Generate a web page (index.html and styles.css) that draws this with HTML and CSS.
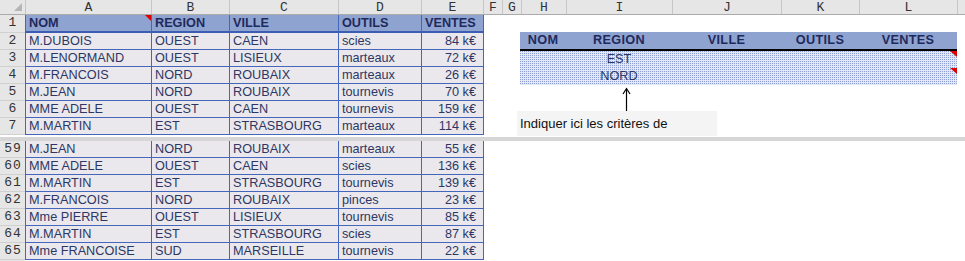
FILE: index.html
```html
<!DOCTYPE html>
<html lang="fr">
<head>
<meta charset="utf-8">
<link rel="stylesheet" href="styles.css">
</head>
<body>
<div class="sheet">
  <div class="colhdr">
    <div class="ch corner"><svg width="8" height="8" viewBox="0 0 8 8"><polygon points="8,0 8,8 0,8" fill="#b5b5b5"/></svg></div>
    <div class="ch w-a">A</div>
    <div class="ch w-b">B</div>
    <div class="ch w-c">C</div>
    <div class="ch w-d">D</div>
    <div class="ch w-e">E</div>
    <div class="ch w-f">F</div>
    <div class="ch w-g">G</div>
    <div class="ch w-h">H</div>
    <div class="ch w-i">I</div>
    <div class="ch w-j">J</div>
    <div class="ch w-k">K</div>
    <div class="ch w-l">L</div>
    <div class="ch rest"></div>
  </div>

  <div class="pane">
    <div class="left">
      <div class="row head">
        <div class="rh">1</div>
        <div class="c a note">NOM</div><div class="c b">REGION</div><div class="c cc">VILLE</div><div class="c d">OUTILS</div><div class="c e">VENTES</div>
      </div>
      <div class="row">
        <div class="rh">2</div>
        <div class="c a">M.DUBOIS</div><div class="c b">OUEST</div><div class="c cc">CAEN</div><div class="c d">scies</div><div class="c e num">84 k€</div>
      </div>
      <div class="row">
        <div class="rh">3</div>
        <div class="c a">M.LENORMAND</div><div class="c b">OUEST</div><div class="c cc">LISIEUX</div><div class="c d">marteaux</div><div class="c e num">72 k€</div>
      </div>
      <div class="row">
        <div class="rh">4</div>
        <div class="c a">M.FRANCOIS</div><div class="c b">NORD</div><div class="c cc">ROUBAIX</div><div class="c d">marteaux</div><div class="c e num">26 k€</div>
      </div>
      <div class="row">
        <div class="rh">5</div>
        <div class="c a">M.JEAN</div><div class="c b">NORD</div><div class="c cc">ROUBAIX</div><div class="c d">tournevis</div><div class="c e num">70 k€</div>
      </div>
      <div class="row">
        <div class="rh">6</div>
        <div class="c a">MME ADELE</div><div class="c b">OUEST</div><div class="c cc">CAEN</div><div class="c d">tournevis</div><div class="c e num">159 k€</div>
      </div>
      <div class="row">
        <div class="rh">7</div>
        <div class="c a">M.MARTIN</div><div class="c b">EST</div><div class="c cc">STRASBOURG</div><div class="c d">marteaux</div><div class="c e num">114 k€</div>
      </div>
    </div>

    <div class="right">
      <div class="crit crit-head">
        <div class="k w-h2">NOM</div><div class="k w-i">REGION</div><div class="k w-j">VILLE</div><div class="k w-k">OUTILS</div><div class="k w-l">VENTES</div>
      </div>
      <div class="dots-wrap">
        <svg class="dots" width="437" height="34" shape-rendering="crispEdges">
          <defs>
            <pattern id="dotpat" width="2" height="2" patternUnits="userSpaceOnUse">
              <rect x="0" y="0" width="1" height="1" fill="#8d9ed4"/>
            </pattern>
          </defs>
          <rect width="437" height="34" fill="#e3e8f6"/>
          <rect width="437" height="34" fill="url(#dotpat)"/>
        </svg>
        <div class="dots-rows">
          <div class="crit">
            <div class="k w-h2"></div><div class="k w-i">EST</div><div class="k w-j"></div><div class="k w-k"></div><div class="k w-l note2"></div>
          </div>
          <div class="crit">
            <div class="k w-h2"></div><div class="k w-i">NORD</div><div class="k w-j"></div><div class="k w-k"></div><div class="k w-l note2"></div>
          </div>
        </div>
      </div>
      <svg class="arrow" width="9" height="24" viewBox="0 0 9 24">
        <line x1="4.5" y1="2" x2="4.5" y2="24" stroke="#000" stroke-width="1.2"/>
        <polyline points="1,7 4.5,1.5 8,7" fill="none" stroke="#000" stroke-width="1.2"/>
      </svg>
      <div class="memo">Indiquer ici les critères de</div>
    </div>
  </div>

  <div class="divider"></div>

  <div class="pane">
    <div class="left">
      <div class="row">
        <div class="rh">59</div>
        <div class="c a">M.JEAN</div><div class="c b">NORD</div><div class="c cc">ROUBAIX</div><div class="c d">marteaux</div><div class="c e num">55 k€</div>
      </div>
      <div class="row">
        <div class="rh">60</div>
        <div class="c a">MME ADELE</div><div class="c b">OUEST</div><div class="c cc">CAEN</div><div class="c d">scies</div><div class="c e num">136 k€</div>
      </div>
      <div class="row">
        <div class="rh">61</div>
        <div class="c a">M.MARTIN</div><div class="c b">EST</div><div class="c cc">STRASBOURG</div><div class="c d">tournevis</div><div class="c e num">139 k€</div>
      </div>
      <div class="row">
        <div class="rh">62</div>
        <div class="c a">M.FRANCOIS</div><div class="c b">NORD</div><div class="c cc">ROUBAIX</div><div class="c d">pinces</div><div class="c e num">23 k€</div>
      </div>
      <div class="row">
        <div class="rh">63</div>
        <div class="c a">Mme PIERRE</div><div class="c b">OUEST</div><div class="c cc">LISIEUX</div><div class="c d">tournevis</div><div class="c e num">85 k€</div>
      </div>
      <div class="row">
        <div class="rh">64</div>
        <div class="c a">M.MARTIN</div><div class="c b">EST</div><div class="c cc">STRASBOURG</div><div class="c d">scies</div><div class="c e num">87 k€</div>
      </div>
      <div class="row">
        <div class="rh">65</div>
        <div class="c a">Mme FRANCOISE</div><div class="c b">SUD</div><div class="c cc">MARSEILLE</div><div class="c d">tournevis</div><div class="c e num">22 k€</div>
      </div>
      <div class="row tail">
        <div class="rh"></div>
      </div>
    </div>
  </div>
</div>
</body>
</html>
```
FILE: styles.css
```css
* { box-sizing: border-box; }
html, body { margin: 0; padding: 0; background: #fff; }
body { width: 965px; height: 261px; overflow: hidden; }

.sheet { width: 965px; height: 261px; overflow: hidden; font-family: "Liberation Sans", Arial, sans-serif; }

/* column header */
.colhdr { display: flex; height: 15px; background: #e6e6e6; border-bottom: 1px solid #ababab; }
.ch {
  height: 14px; border-right: 1px solid #c6c6c6;
  font-family: "Liberation Mono", "Courier New", monospace; font-size: 13px; line-height: 15px;
  color: #333; text-align: center;
}
.corner { width: 26px; display: flex; align-items: flex-end; justify-content: flex-end; padding: 0 3px 3px 0; }
.ch.w-a { width: 126px; }
.ch.w-b { width: 78px; }
.ch.w-c { width: 109px; }
.ch.w-d { width: 83px; }
.ch.w-e { width: 62px; }
.ch.w-f { width: 19px; }
.ch.w-g { width: 19px; }
.ch.w-h { width: 45px; }
.ch.rest { flex: 1; border-right: none; }
.w-i { width: 106px; }
.w-j { width: 109px; }
.w-k { width: 78px; }
.w-l { width: 98px; }

/* panes */
.pane { display: flex; align-items: flex-start; }
.left { width: 484px; flex: none; }
.right { margin-left: 36px; padding-top: 17px; display: flex; flex-direction: column; }

.row { display: flex; height: 17px; }
.row.head { height: 18px; }
.row.tail { height: 2px; }
.rh {
  width: 25px; flex: none; background: #e6e6e6; border-bottom: 1px solid #d0d0d0;
  font-family: "Liberation Mono", "Courier New", monospace; font-size: 13px; line-height: 16px;
  color: #333; text-align: center; letter-spacing: 1px; padding-left: 1px;
}
.c {
  flex: none; height: 100%;
  background: #eae8ec;
  border-right: 1px solid #4466bb; border-bottom: 1px solid #4466bb;
  font-size: 12.7px; line-height: 16px; color: #2d3764;
  padding-left: 3px; white-space: nowrap; overflow: hidden;
}
.head .c {
  background: #8fa3d1; border-bottom: 2px solid #3d5cb3;
  font-weight: bold; color: #1f2a5c; line-height: 17px;
}
.c.a { width: 127px; border-left: 1px solid #4466bb; }
.c.b { width: 78px; }
.c.cc { width: 109px; }
.c.d { width: 83px; }
.c.e { width: 62px; }
.c.num { text-align: right; padding-right: 7px; }

.note { position: relative; }
.note::after {
  content: ""; position: absolute; right: 0; top: 0;
  border-style: solid; border-width: 0 6px 6px 0;
  border-color: transparent #e00000 transparent transparent;
}

/* criteria block */
.crit { display: flex; height: 17px; }
.crit-head {
  height: 19px; background: #8fa3d1; border-bottom: 2px solid #000;
}
.k { flex: none; text-align: center; font-size: 12.7px; line-height: 17px; color: #2d3764; white-space: nowrap; }
.crit-head .k { font-weight: bold; color: #1f2a5c; letter-spacing: 0.3px; }
.w-h2 { width: 46px; }

.dots-wrap { display: grid; width: 437px; height: 34px; }
.dots, .dots-rows { grid-area: 1 / 1; }
.dots { display: block; }
.note2 { position: relative; }
.note2::after {
  content: ""; position: absolute; right: 0; top: 0;
  border-style: solid; border-width: 0 7px 6px 0;
  border-color: transparent #e00000 transparent transparent;
}

.arrow { display: block; margin-left: 102px; margin-top: 2px; }
.memo {
  margin-left: -3px; width: 200px; height: 25px;
  background: #f4f4f4; color: #111;
  font-size: 13px; line-height: 25px; padding-left: 3px;
}

.divider { height: 4px; margin-top: 1px; background: #d6d6d6; }
```
